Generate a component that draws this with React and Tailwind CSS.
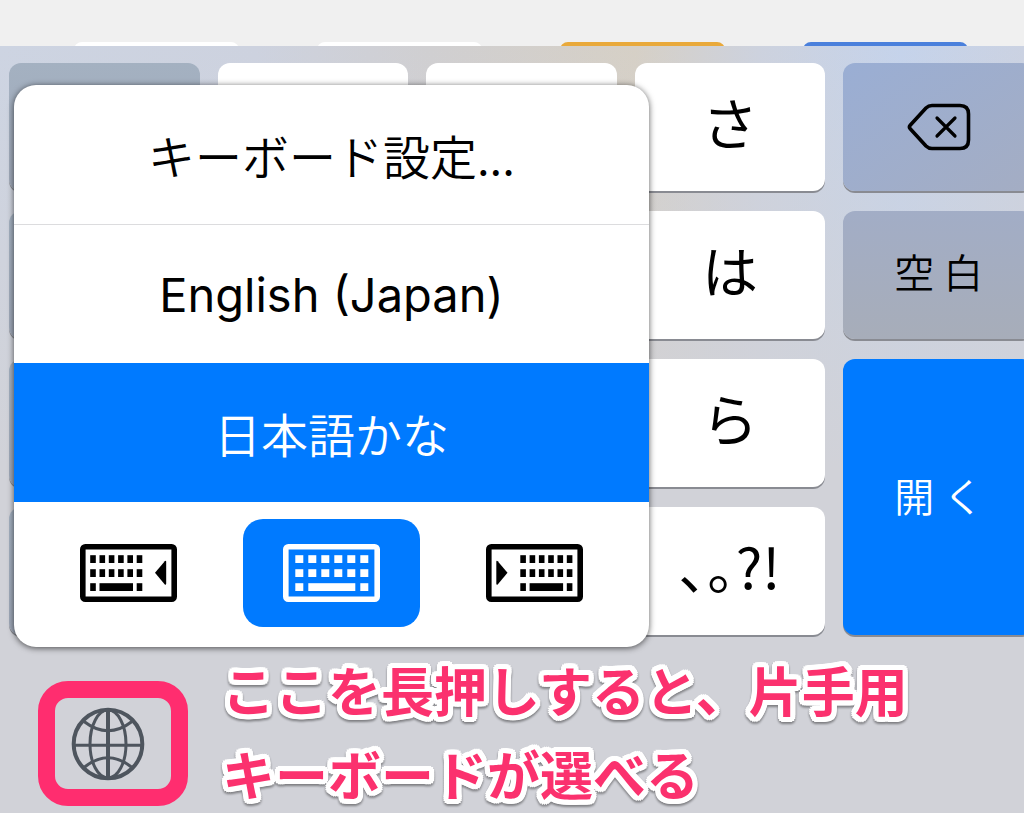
import React, { useState } from 'react';

const tabs = ['bg-white', 'bg-white', 'bg-[#e9a93a]', 'bg-[#4a80dc]'];

const languages = ['キーボード設定...', 'English (Japan)', '日本語かな'];

// One entry per key, row by row. The open key takes up the last two rows.
const keys = [
  { label: '', type: 'slate' },
  { label: '', type: 'kana' },
  { label: '', type: 'kana' },
  { label: 'さ', type: 'kana' },
  { label: 'delete', type: 'delete' },
  { label: '', type: 'slate' },
  { label: '', type: 'kana' },
  { label: '', type: 'kana' },
  { label: 'は', type: 'kana' },
  { label: '空 白', type: 'space' },
  { label: '', type: 'slate' },
  { label: '', type: 'kana' },
  { label: '', type: 'kana' },
  { label: 'ら', type: 'kana' },
  { label: '開 く', type: 'open' },
  { label: '', type: 'slate' },
  { label: '', type: 'kana' },
  { label: '', type: 'kana' },
  { label: '､｡?!', type: 'kana' },
];

const keyStyles = {
  kana: 'bg-white text-[56px] pb-3',
  slate: 'bg-linear-to-b from-[#a4b1c1] to-[#9fa8b8]',
  delete: 'bg-linear-to-br from-[#9aaed4] to-[#a4adc3]',
  space: 'bg-linear-to-b from-[#a2adc6] to-[#a7adb9] text-[40px] font-[350] pb-2',
  open: 'row-span-2 bg-[#007aff] text-[40px] font-[350] text-white pb-1',
};

function DeleteIcon() {
  return (
    <svg
      className="w-16 h-12"
      viewBox="0 0 64 48"
      fill="none"
      stroke="currentColor"
      strokeWidth="3.6"
      strokeLinecap="round"
      strokeLinejoin="round"
    >
      <path d="M25 2.5H53Q61.5 2.5 61.5 11V37Q61.5 45.5 53 45.5H25Q21.500 45.500 19 43L3.200 25.800Q1.600 24 3.200 22.200L19 5Q21.500 2.500 25 2.500Z" />
      <path strokeWidth="3.2" d="M30 15L48 33M48 15L30 33" />
    </svg>
  );
}

function GlobeIcon() {
  return (
    <svg className="w-[74px] h-[74px]" viewBox="0 0 74 74" fill="none" stroke="#4e555e" strokeWidth="3">
      <circle cx="37" cy="37" r="34.300" strokeWidth="4" />
      <ellipse cx="37" cy="37" rx="18" ry="34" />
      <path strokeWidth="4" d="M37 3V71" />
      <path d="M3 38.300H71" />
      <path d="M13 14.500Q37 33 61 14.500" />
      <path d="M13 60.500Q37 41 61 60.500" />
    </svg>
  );
}

function KeyboardIcon({ side }) {
  const full = side === 'center';
  const start = full ? 12.3 : side === 'left' ? 10.2 : 34.3;
  const pitch = full ? 13 : 9.3;
  const size = full ? 8 : 5.6;

  return (
    <svg className="w-[97px] h-[58px]" viewBox="0 0 97 58" fill="currentColor">
      <rect x="2.800" y="2.800" width="91.400" height="52.400" rx="2.500" fill="none" stroke="currentColor" strokeWidth="5.600" />
      {[0, 1, 2, 3, 4, 5].map((i) => (
        <g key={i}>
          <rect x={start + i * pitch} y="11.200" width={size} height="7.800" />
          <rect x={start + i * pitch} y="25.200" width={size} height="7.800" />
        </g>
      ))}
      <rect x={start} y="39.200" width={size} height="7.800" />
      <rect x={start + pitch} y="39.200" width={pitch * 3 + size} height="7.800" />
      <rect x={start + pitch * 5} y="39.200" width={size} height="7.800" />
      {side === 'left' && <path d="M75 28.800L84.800 17.200Q86.200 16.200 86.200 18V39.600Q86.200 41.400 84.800 40.400Z" />}
      {side === 'right' && <path d="M21.500 28.800L11.700 17.200Q10.300 16.200 10.300 18V39.600Q10.300 41.400 11.700 40.400Z" />}
    </svg>
  );
}

function App() {
  const [language, setLanguage] = useState(2);
  const [side, setSide] = useState('center');

  return (
    <div className="bg-white text-black font-['Inter','Noto_Sans_CJK_JP',sans-serif] overflow-hidden">
      {/* Top of the page behind the keyboard */}
      <div className="bg-[#f0f0f0] pt-[42px]">
        <div className="flex gap-[78px] pl-[74px] h-1 overflow-hidden">
          {tabs.map((color, i) => (
            <div key={i} className={`w-[165px] h-12 shrink-0 rounded-lg ${color}`}></div>
          ))}
        </div>
      </div>

      {/* Keyboard */}
      <div className="relative pt-[17px] bg-[linear-gradient(to_bottom,transparent,#d1d2d8_55%),linear-gradient(to_right,#cdd4e2,#cdd2df_25%,#d0cfd1_42%,#d6d0c6_62%,#cdd2de_74%,#c5d3eb_88%,#cbd2e2)]">
        <div className="grid grid-cols-5 auto-rows-[128px] gap-x-[18px] gap-y-5 ml-[9px] -mr-[10px]">
          {keys.map((key, i) => (
            <button
              key={i}
              className={`flex items-center justify-center rounded-xl leading-none font-['Noto_Sans_CJK_JP',sans-serif] shadow-[0_2px_0_#898b92] ${keyStyles[key.type]}`}
            >
              {key.type === 'delete' ? <DeleteIcon /> : key.label}
            </button>
          ))}
        </div>

        {/* Keyboard switcher */}
        <div className="absolute left-3.5 top-[39px] w-[62%] rounded-[22px] bg-white overflow-hidden shadow-[0_1px_6px_rgba(0,0,0,0.65)]">
          {languages.map((name, i) => (
            <button
              key={name}
              onClick={() => setLanguage(i)}
              className={`block w-full h-[139px] text-[47px] leading-none ${
                language === i ? 'bg-[#007aff] text-white' : ''
              } ${
                i === 1 ? 'border-t border-[#dcdcde]' : "font-[350] font-['Noto_Sans_CJK_JP',sans-serif]"
              }`}
            >
              {name}
            </button>
          ))}
          <div className="grid grid-cols-3 gap-[25px] px-[26px] pt-[17px] pb-5">
            {['left', 'center', 'right'].map((value) => (
              <button
                key={value}
                aria-label={`${value} keyboard`}
                onClick={() => setSide(value)}
                className={`flex items-center justify-center h-[108px] rounded-[20px] ${
                  side === value ? 'bg-[#007aff] text-white' : ''
                }`}
              >
                <KeyboardIcon side={value} />
              </button>
            ))}
          </div>
        </div>

        {/* Globe key and note */}
        <div className="flex items-start pl-[38px] pb-[7px]">
          <button
            aria-label="globe"
            className="flex items-center justify-start pl-4 w-[150px] h-[125px] mt-[46px] shrink-0 rounded-[30px] border-[17px] border-[#ff2d6f]"
          >
            <GlobeIcon />
          </button>
          <p className="ml-[34px] mt-3 -mb-4 text-[53px] leading-[84px] font-bold whitespace-nowrap text-[#fb316e] font-['Noto_Sans_CJK_JP',sans-serif] [text-shadow:5px_0_#fff,-5px_0_#fff,0_5px_#fff,0_-5px_#fff,4px_4px_#fff,-4px_4px_#fff,4px_-4px_#fff,-4px_-4px_#fff,5px_2px_#fff,-5px_2px_#fff,5px_-2px_#fff,-5px_-2px_#fff,2px_5px_#fff,-2px_5px_#fff,2px_-5px_#fff,-2px_-5px_#fff,2px_2px_#fff,-2px_2px_#fff,2px_-2px_#fff,-2px_-2px_#fff] drop-shadow-[0_2px_1px_rgba(0,0,0,0.4)]">
            ここを長押しすると、片手用
            <br />
            キーボードが選べる
          </p>
        </div>
      </div>
    </div>
  );
}

export default App;
